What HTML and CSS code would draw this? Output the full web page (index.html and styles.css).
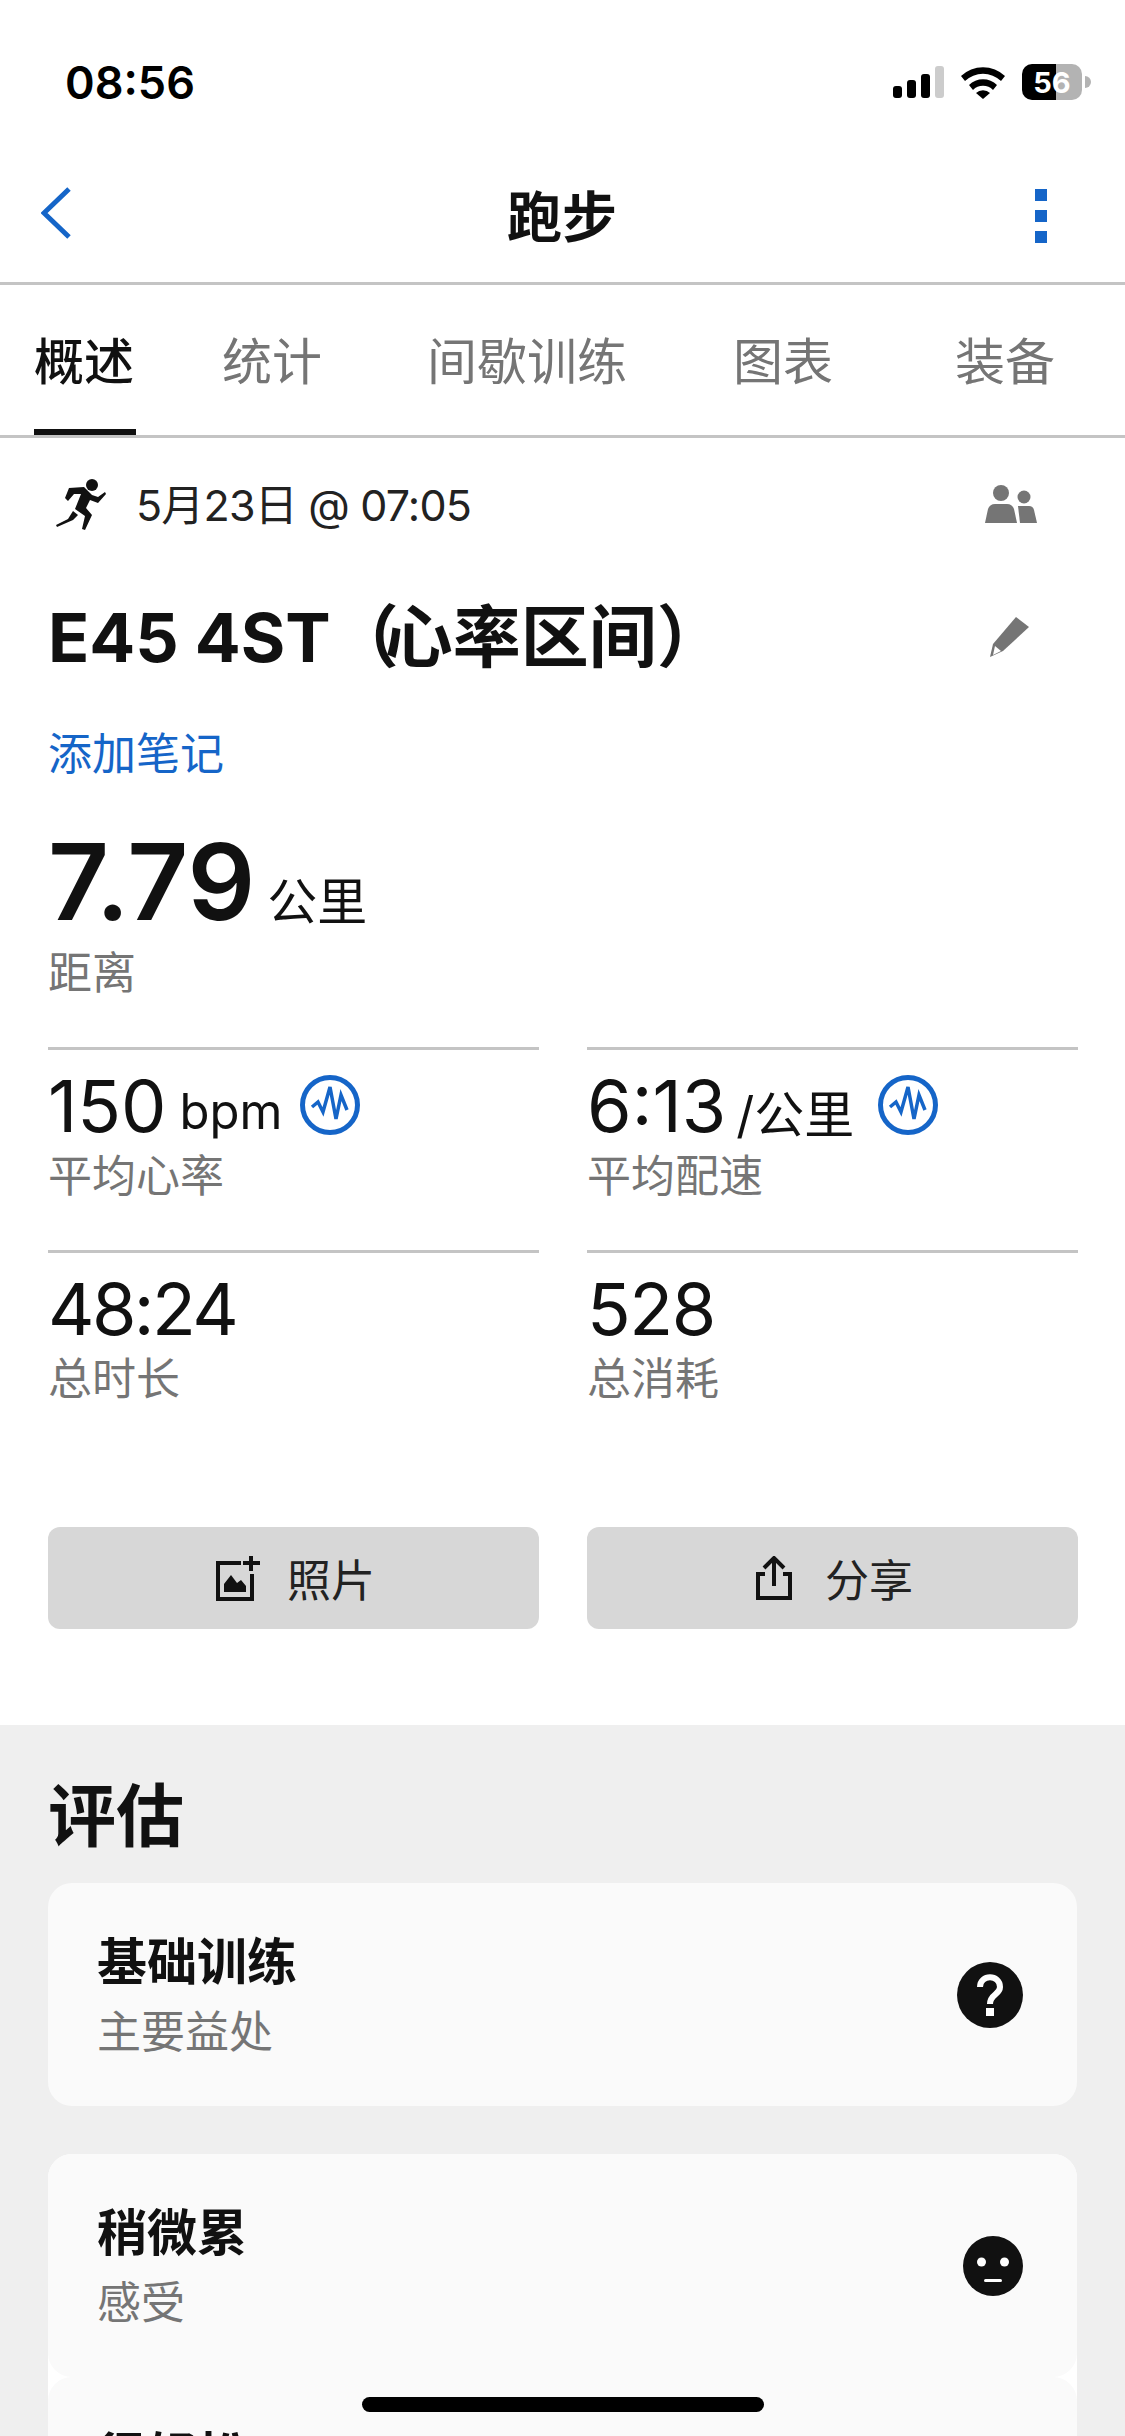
FILE: index.html
```html
<!DOCTYPE html>
<html lang="zh-CN">
<head>
    <meta charset="UTF-8">
    <meta name="viewport" content="width=device-width, initial-scale=1.0">
    <title>跑步</title>
    <link rel="stylesheet" href="styles.css">
</head>
<body>
<div class="screen">

    <div class="status-bar">
        <span class="clock">08:56</span>
        <div class="status-icons">
            <svg width="51" height="32" viewBox="0 0 51 32">
                <rect x="0" y="20" width="9" height="12" rx="3" fill="#000"/>
                <rect x="14" y="14" width="9" height="18" rx="3" fill="#000"/>
                <rect x="28" y="8" width="9" height="24" rx="3" fill="#000"/>
                <rect x="42" y="0" width="9" height="32" rx="3" fill="#ccc"/>
            </svg>
            <svg width="46" height="34" viewBox="0 0 46 34">
                <path d="M1 11 A32 32 0 0 1 45 11 L41 16 A26 26 0 0 0 5 16 Z" fill="#000"/>
                <path d="M9 20 A20 20 0 0 1 37 20 L33 25 A14 14 0 0 0 13 25 Z" fill="#000"/>
                <path d="M16 28 A10 10 0 0 1 30 28 L23 34 Z" fill="#000"/>
            </svg>
            <div class="battery">
                <div class="battery-body"><span class="battery-level">56</span></div>
                <div class="battery-tip"></div>
            </div>
        </div>
    </div>

    <header class="nav-bar">
        <svg width="30" height="52" viewBox="0 0 30 52">
            <path d="M28 2 L3 26 L28 50" fill="none" stroke="#1565c8" stroke-width="5"/>
        </svg>
        <h1>跑步</h1>
        <div class="more">
            <span></span><span></span><span></span>
        </div>
    </header>

    <nav class="tabs">
        <a class="tab active" href="#">概述</a>
        <a class="tab" href="#">统计</a>
        <a class="tab" href="#">间歇训练</a>
        <a class="tab" href="#">图表</a>
        <a class="tab" href="#">装备</a>
    </nav>

    <section class="summary">
        <div class="date-row">
            <div class="date-left">
                <svg width="50" height="52" viewBox="0 0 50 52">
                    <circle cx="36" cy="7" r="6" fill="#111"/>
                    <path d="M13 10 L28 9 L36 17 L42 19 L49 14 L50 16 L42 25 L34 22 L30 30 L36 37 L29 52 L26 51 L29 38 L19 31 L25 16 L18 16 L12 23 L9 20 Z" fill="#111"/>
                    <path d="M17 33 L22 37 L17 42 L1 49 L0 47 L12 41 Z" fill="#111"/>
                </svg>
                <span class="date-text">5月23日 @ 07:05</span>
            </div>
            <svg width="52" height="38" viewBox="0 0 52 38">
                <circle cx="16" cy="8" r="8" fill="#757575"/>
                <circle cx="39" cy="12" r="6.5" fill="#757575"/>
                <path d="M0 38 L3 24 Q5 19 10 19 L22 19 Q27 19 29 24 L32 38 Z" fill="#757575"/>
                <path d="M35 38 L33 21 L44 21 Q48 21 49 25 L52 38 Z" fill="#757575"/>
            </svg>
        </div>

        <div class="title-row">
            <h2>E45 4ST<span class="paren">（</span>心率区间）</h2>
            <svg width="44" height="44" viewBox="0 0 44 44">
                <path d="M28 3 L41 13 L15 37 L2 43 L5 30 Z" fill="#757575"/>
                <path d="M7 32 L13 37 L5 41 Z" fill="#fff"/>
            </svg>
        </div>

        <a class="add-note" href="#">添加笔记</a>

        <div class="distance">
            <span class="distance-value">7.79</span>
            <span class="distance-unit">公里</span>
        </div>
        <div class="label">距离</div>

        <div class="stats">
            <div class="stat">
                <div class="stat-value">
                    <span class="num">150</span>
                    <span class="unit">bpm</span>
                    <svg class="pulse" width="60" height="60" viewBox="0 0 60 60">
                        <circle cx="30" cy="30" r="27.5" fill="none" stroke="#1565c8" stroke-width="5"/>
                        <path d="M12 32 L18 27 L23 37 L30 12 L36 44 L41 20 L47 35" fill="none" stroke="#1565c8" stroke-width="3.5"/>
                    </svg>
                </div>
                <div class="label">平均心率</div>
            </div>
            <div class="stat">
                <div class="stat-value">
                    <span class="num">6:13</span>
                    <span class="unit unit-pace">/公里</span>
                    <svg class="pulse" width="60" height="60" viewBox="0 0 60 60">
                        <circle cx="30" cy="30" r="27.5" fill="none" stroke="#1565c8" stroke-width="5"/>
                        <path d="M12 32 L18 27 L23 37 L30 12 L36 44 L41 20 L47 35" fill="none" stroke="#1565c8" stroke-width="3.5"/>
                    </svg>
                </div>
                <div class="label">平均配速</div>
            </div>
            <div class="stat">
                <div class="stat-value"><span class="num num-time">48:24</span></div>
                <div class="label">总时长</div>
            </div>
            <div class="stat">
                <div class="stat-value"><span class="num num-count">528</span></div>
                <div class="label">总消耗</div>
            </div>
        </div>

        <div class="actions">
            <button class="action">
                <svg width="44" height="45" viewBox="0 0 44 45">
                    <path d="M25 7 L2 7 L2 43 L36 43 L36 18" fill="none" stroke="#111" stroke-width="4"/>
                    <path d="M35 0 L35 15 M27 7 L44 7" fill="none" stroke="#111" stroke-width="4"/>
                    <path d="M8 36 L8 28 L15 19 L21 27 L25 24 L30 30 L30 36 Z" fill="#111"/>
                </svg>
                <span>照片</span>
            </button>
            <button class="action action-share">
                <svg width="36" height="44" viewBox="0 0 36 44">
                    <path d="M9 18 L2 18 L2 42 L34 42 L34 18 L27 18" fill="none" stroke="#111" stroke-width="4"/>
                    <path d="M18 30 L18 3 M8 12 L18 2 L28 12" fill="none" stroke="#111" stroke-width="4"/>
                </svg>
                <span>分享</span>
            </button>
        </div>
    </section>

    <section class="evaluation">
        <h3>评估</h3>
        <div class="card">
            <div>
                <div class="card-title">基础训练</div>
                <div class="label">主要益处</div>
            </div>
            <svg width="66" height="66" viewBox="0 0 66 66">
                <circle cx="33" cy="33" r="33" fill="#111"/>
                <path d="M23 25 C23 12 43 12 43 25 C43 33 33 32 33 42" fill="none" stroke="#fff" stroke-width="6"/>
                <rect x="29" y="46" width="8" height="8" fill="#fff"/>
            </svg>
        </div>
        <div class="card-stack">
            <div class="card">
                <div>
                    <div class="card-title">稍微累</div>
                    <div class="label">感受</div>
                </div>
                <svg width="60" height="60" viewBox="0 0 60 60">
                    <circle cx="30" cy="30" r="30" fill="#111"/>
                    <circle cx="18.500" cy="26" r="4.500" fill="#fff"/>
                    <circle cx="41.500" cy="26" r="4.500" fill="#fff"/>
                    <rect x="21" y="43" width="18" height="3" rx="1.500" fill="#fff"/>
                </svg>
            </div>
            <div class="card card-top">
                <div class="card-title">很轻松</div>
            </div>
        </div>
    </section>

    <div class="home-indicator"></div>
</div>
</body>
</html>
```

FILE: styles.css
```css
* {
    box-sizing: border-box;
}

html, body {
    margin: 0;
    padding: 0;
}

body {
    background-color: #fff;
    color: #111;
    font-family: Inter, "Noto Sans CJK SC", sans-serif;
}

.screen {
    position: relative;
    width: 1125px;
    height: 2436px;
    overflow: hidden;
}

/* status bar */
.status-bar {
    height: 163px;
    padding: 59px 34px 0 65px;
    display: flex;
    justify-content: space-between;
    align-items: flex-start;
}

.clock {
    font-size: 45px;
    line-height: 48px;
    font-weight: 600;
    color: #000;
}

.status-icons {
    display: flex;
    align-items: center;
    gap: 16px;
    padding-top: 5px;
}

.battery {
    display: flex;
    align-items: center;
    gap: 3px;
}

.battery-body {
    width: 60px;
    height: 36px;
    border-radius: 10px;
    background: linear-gradient(to right, #000 57%, #b3b3b3 57%);
    display: flex;
    align-items: center;
    justify-content: center;
}

.battery-level {
    color: #fff;
    font-size: 29px;
    font-weight: 700;
}

.battery-tip {
    width: 6px;
    height: 12px;
    background-color: #b3b3b3;
    border-radius: 0 6px 6px 0;
}

/* nav bar */
.nav-bar {
    height: 122px;
    padding: 0 78px 19px 41px;
    display: grid;
    grid-template-columns: 466px auto 1fr;
    align-items: center;
    border-bottom: 3px solid #c4c4c4;
}

.nav-bar h1 {
    margin: 0;
    font-size: 55px;
    font-weight: 700;
}

.more {
    justify-self: end;
    margin-top: 6px;
    display: flex;
    flex-direction: column;
    gap: 9px;
}

.more span {
    width: 12px;
    height: 12px;
    background-color: #1565c8;
}

.tabs {
    height: 153px;
    padding-left: 34px;
    display: grid;
    grid-template-columns: 188px 205px 306px 222px auto;
    border-bottom: 3px solid #c4c4c4;
}

.tab {
    justify-self: start;
    height: 150px;
    padding-top: 42px;
    font-size: 50px;
    line-height: 70px;
    color: #757575;
    text-decoration: none;
}

.tab.active {
    padding-right: 2px;
    color: #111;
    font-weight: 500;
    border-bottom: 6px solid #111;
}

/* activity summary */
.summary {
    height: 1287px;
    padding: 0 48px;
}

.date-row {
    height: 132px;
    padding: 0 40px 0 8px;
    display: flex;
    justify-content: space-between;
    align-items: center;
}

.date-left {
    display: flex;
    align-items: center;
    gap: 30px;
}

.date-text {
    margin-bottom: 5px;
    font-size: 43px;
    letter-spacing: -0.8px;
    color: #222;
}

.title-row {
    margin-top: 18px;
    height: 96px;
    padding-right: 45px;
    display: flex;
    justify-content: space-between;
    align-items: center;
}

.title-row h2 {
    margin: 0 0 8px;
    font-size: 68px;
    font-weight: 700;
}

.paren {
    letter-spacing: -14px;
}

.add-note {
    display: block;
    margin-top: 39px;
    font-size: 44px;
    line-height: 62px;
    color: #1565c8;
    text-decoration: none;
}

.distance {
    margin-top: 33px;
    height: 125px;
    display: flex;
    align-items: baseline;
    gap: 12px;
}

.distance-value {
    font-size: 106px;
    line-height: 128px;
    font-weight: 600;
}

.distance-unit {
    font-size: 50px;
}

.label {
    font-size: 44px;
    line-height: 60px;
    color: #757575;
}

.stats {
    margin-top: 44px;
    display: grid;
    grid-template-columns: 491px 491px;
    column-gap: 48px;
}

.stat {
    height: 203px;
    padding-top: 14px;
    border-top: 3px solid #c4c4c4;
}

.stat-value {
    height: 82px;
    display: flex;
    align-items: center;
    gap: 13px;
}

.num {
    font-size: 72px;
}

.num-time {
    letter-spacing: -2.6px;
}

.num-count {
    letter-spacing: -1.5px;
}

.unit {
    font-size: 49px;
    padding-top: 12px;
}

.unit-pace {
    margin: 0 6px 0 -3px;
    font-size: 50px;
}

.pulse {
    margin-left: 5px;
}

.actions {
    margin-top: 74px;
    display: grid;
    grid-template-columns: 491px 491px;
    column-gap: 48px;
}

.action {
    height: 102px;
    padding: 0 0 0 4px;
    border: none;
    border-radius: 12px;
    background-color: #d7d7d7;
    color: #222;
    font-family: inherit;
    font-size: 44px;
    display: flex;
    align-items: center;
    justify-content: center;
    gap: 27px;
}

.action-share {
    gap: 33px;
}

/* evaluation */
.evaluation {
    height: 711px;
    padding: 45px 48px 0;
    background-color: #efefef;
}

.evaluation h3 {
    margin: 0 0 21px;
    font-size: 68px;
    line-height: 92px;
    font-weight: 700;
}

.card {
    height: 223px;
    margin-bottom: 48px;
    padding: 0 54px 0 49px;
    background-color: #fafafa;
    border-radius: 24px;
    display: flex;
    justify-content: space-between;
    align-items: center;
}

.card-top {
    align-items: flex-start;
    padding-top: 44px;
}

.card-stack {
    background-color: #fff;
    border-radius: 24px;
}

.card-stack .card {
    margin-bottom: 0;
}

.card-title {
    font-size: 50px;
    line-height: 70px;
    font-weight: 600;
    margin-bottom: 5px;
}

.home-indicator {
    position: absolute;
    left: 362px;
    top: 2397px;
    width: 402px;
    height: 15px;
    border-radius: 8px;
    background-color: #000;
}
```
